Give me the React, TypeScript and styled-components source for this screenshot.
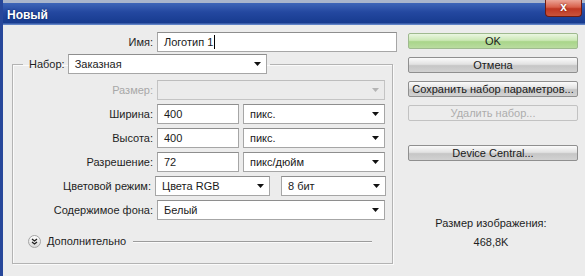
import React from "react";
import styled, { createGlobalStyle } from "styled-components";

const GlobalStyle = createGlobalStyle`
    html, body {
        margin: 0;
        padding: 0;
    }
    body {
        width: 585px;
        height: 276px;
        overflow: hidden;
        background: #ececec;
        font-family: "Liberation Sans", Arial, sans-serif;
        font-size: 11px;
        color: #1e1e1e;
    }
`;

type FieldProps = { w: number };

const Arrow: React.FunctionComponent<{ disabled?: boolean }> = ({ disabled }) => (
    <svg width="7" height="4" viewBox="0 0 7 4">
        <polygon points="0,0 7,0 3.5,4" fill={disabled ? "#b4b4b4" : "#111"} />
    </svg>
);

const Select: React.FunctionComponent<{ w: number; value?: string; disabled?: boolean }> = ({ w, value, disabled }) => (
    <SelectBox w={w} disabled={disabled}>
        <span>{value}</span>
        <Arrow disabled={disabled} />
    </SelectBox>
);

const Row: React.FunctionComponent<{ label: string; disabled?: boolean; children: React.ReactNode }> = ({
    label,
    disabled,
    children,
}) => (
    <FormRow>
        <Label disabled={disabled}>{label}</Label>
        <Controls>{children}</Controls>
    </FormRow>
);

export default function App() {
    return (
        <Window>
            <GlobalStyle />
            <TitleBar>
                <Title>Новый</Title>
                <CloseButton>x</CloseButton>
            </TitleBar>
            <Body>
                <LeftColumn>
                    <NameRow>
                        <NameLabel>Имя:</NameLabel>
                        <TextField w={240}>
                            Логотип 1<Caret />
                        </TextField>
                    </NameRow>
                    <Group>
                        <Legend>
                            <LegendLabel>Набор:</LegendLabel>
                            <Select w={199} value="Заказная" />
                        </Legend>
                        <GroupBody>
                            <Row label="Размер:" disabled>
                                <Select w={228} disabled />
                            </Row>
                            <Row label="Ширина:">
                                <TextField w={82}>400</TextField>
                                <Select w={142} value="пикс." />
                            </Row>
                            <Row label="Высота:">
                                <TextField w={82}>400</TextField>
                                <Select w={142} value="пикс." />
                            </Row>
                            <Row label="Разрешение:">
                                <TextField w={82}>72</TextField>
                                <Select w={142} value="пикс/дюйм" />
                            </Row>
                            <Row label="Цветовой режим:">
                                <Select w={115} value="Цвета RGB" />
                                <Spacer />
                                <Select w={105} value="8 бит" />
                            </Row>
                            <Row label="Содержимое фона:">
                                <Select w={228} value="Белый" />
                            </Row>
                            <AdvancedRow>
                                <ChevronButton>
                                    <svg width="7" height="7" viewBox="0 0 7 7">
                                        <polyline points="1,1 3.5,3 6,1" fill="none" stroke="#222" strokeWidth="1.3" />
                                        <polyline points="1,4 3.5,6 6,4" fill="none" stroke="#222" strokeWidth="1.3" />
                                    </svg>
                                </ChevronButton>
                                <AdvancedText>Дополнительно</AdvancedText>
                                <Rule />
                            </AdvancedRow>
                        </GroupBody>
                    </Group>
                </LeftColumn>
                <RightColumn>
                    <Button primary>OK</Button>
                    <Button>Отмена</Button>
                    <Button>Сохранить набор параметров...</Button>
                    <Button disabled>Удалить набор...</Button>
                    <Button gapBefore>Device Central...</Button>
                    <Info>
                        <div>Размер изображения:</div>
                        <InfoValue>468,8K</InfoValue>
                    </Info>
                </RightColumn>
            </Body>
        </Window>
    );
}

const Window = styled.div`
    width: 585px;
    height: 276px;
    box-sizing: border-box;
    display: flex;
    flex-direction: column;
    background: #ececec;
    border-left: 3px solid #27479a;
`;

const TitleBar = styled.div`
    height: 25px;
    flex: none;
    display: flex;
    align-items: flex-start;
    background: linear-gradient(
        to bottom,
        #aab6cc 0,
        #aab6cc 3px,
        #3e66b8 3px,
        #2448a0 12px,
        #173b8f 23px,
        #5f82c6 24px,
        #5f82c6 25px
    );
`;

const Title = styled.div`
    padding: 8px 0 0 4px;
    color: #fff;
    font-weight: bold;
    font-size: 12px;
    text-shadow: 0 0 2px #0b1f55;
`;

const CloseButton = styled.div`
    margin-left: auto;
    margin-right: 3px;
    width: 37px;
    height: 17px;
    box-sizing: border-box;
    border: 1px solid #6e1b10;
    border-top: none;
    border-radius: 0 0 4px 4px;
    background: linear-gradient(to bottom, #eca496 0%, #d8604a 45%, #bf3722 55%, #c9543c 100%);
    color: #fff;
    font-weight: bold;
    font-size: 12px;
    line-height: 15px;
    text-align: center;
    text-shadow: 0 0 2px #5a0d04;
`;

const Body = styled.div`
    flex: 1;
    display: flex;
    padding: 7px 0 0 9px;
`;

const LeftColumn = styled.div`
    width: 385px;
    display: flex;
    flex-direction: column;
`;

const NameRow = styled.div`
    display: flex;
    align-items: center;
    gap: 4px;
`;

const NameLabel = styled.div`
    width: 141px;
    text-align: right;
`;

const TextField = styled.div<FieldProps>`
    width: ${props => props.w}px;
    height: 20px;
    box-sizing: border-box;
    border: 1px solid #a6a6a6;
    border-top-color: #8e8e8e;
    background: #fff;
    padding-left: 6px;
    line-height: 18px;
    color: #1a1a1a;
    display: flex;
    align-items: center;
`;

const Caret = styled.span`
    width: 1px;
    height: 14px;
    background: #000;
    margin-left: 1px;
`;

const SelectBox = styled.div<{ w: number; disabled?: boolean }>`
    width: ${props => props.w}px;
    height: 20px;
    box-sizing: border-box;
    border: 1px solid ${props => (props.disabled ? "#c4c4c4" : "#a6a6a6")};
    border-top-color: ${props => (props.disabled ? "#bdbdbd" : "#8e8e8e")};
    background: ${props => (props.disabled ? "#ebebeb" : "#fff")};
    padding: 0 5px 0 6px;
    display: flex;
    align-items: center;
    justify-content: space-between;
    color: #1a1a1a;
`;

const Group = styled.fieldset`
    width: 381px;
    box-sizing: border-box;
    margin: 2px 0 0;
    padding: 0;
    min-width: 0;
    border: 1px solid #b3b3b3;
    box-shadow: inset 1px 1px 0 #fafafa, 1px 1px 0 #fafafa;
`;

const Legend = styled.legend`
    margin-left: 10px;
    padding: 0 3px;
    display: flex;
    align-items: center;
    gap: 3px;
`;

const LegendLabel = styled.div`
    padding-left: 3px;
`;

const GroupBody = styled.div`
    display: flex;
    flex-direction: column;
    gap: 4px;
    padding: 6px 6px 15px 0;
`;

const FormRow = styled.div`
    display: flex;
    align-items: center;
    gap: 4px;
`;

const Label = styled.div<{ disabled?: boolean }>`
    width: 140px;
    text-align: right;
    color: ${props => (props.disabled ? "#a8a8a8" : "#1e1e1e")};
`;

const Controls = styled.div`
    display: flex;
    align-items: center;
    gap: 4px;
`;

const Spacer = styled.div`
    width: 3px;
`;

const AdvancedRow = styled.div`
    display: flex;
    align-items: center;
    height: 14px;
    margin-top: 10px;
    padding: 0 14px 0 15px;
`;

const ChevronButton = styled.div`
    width: 13px;
    height: 13px;
    box-sizing: border-box;
    border: 1px solid #a4a4a4;
    border-radius: 50%;
    background: linear-gradient(to bottom, #fdfdfd, #d9d9d9);
    display: flex;
    align-items: center;
    justify-content: center;
`;

const AdvancedText = styled.div`
    margin-left: 6px;
`;

const Rule = styled.div`
    flex: 1;
    height: 1px;
    margin-left: 7px;
    background: #9c9c9c;
    box-shadow: 0 1px 0 #fafafa;
`;

const RightColumn = styled.div`
    width: 170px;
    margin-left: 11px;
    padding-top: 1px;
    display: flex;
    flex-direction: column;
    gap: 8px;
`;

const Button = styled.div<{ primary?: boolean; disabled?: boolean; gapBefore?: boolean }>`
    height: 16px;
    box-sizing: border-box;
    margin-top: ${props => (props.gapBefore ? "16px" : "0")};
    border: 1px solid ${props => (props.disabled ? "#c2c2c2" : props.primary ? "#9fba8f" : "#8f8f8f")};
    border-radius: 2px;
    background: ${props =>
        props.disabled
            ? "#ececec"
            : props.primary
            ? "linear-gradient(to bottom, #eaf6e1 0%, #cce8b6 45%, #a9d58a 55%, #b9dc9f 100%)"
            : "linear-gradient(to bottom, #fbfbfb 0%, #e2e2e2 45%, #c6c6c6 55%, #d2d2d2 100%)"};
    color: ${props => (props.disabled ? "#adadad" : "#1a1a1a")};
    text-align: center;
    line-height: 14px;
`;

const Info = styled.div`
    margin-top: 47px;
    display: flex;
    flex-direction: column;
    align-items: center;
    gap: 5px;
    padding-right: 4px;
    line-height: 14px;
`;

const InfoValue = styled.div``;
